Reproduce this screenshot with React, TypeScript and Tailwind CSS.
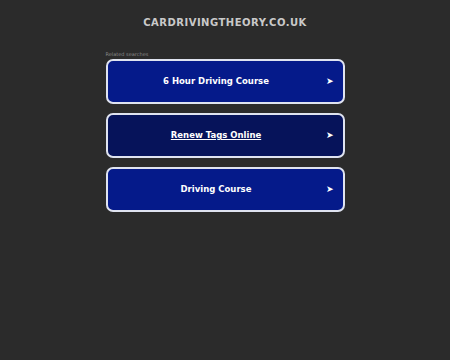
const links = [
  { label: "6 Hour Driving Course", bg: "bg-[#051a8a]", underline: false },
  { label: "Renew Tags Online", bg: "bg-[#06135a]", underline: true },
  { label: "Driving Course", bg: "bg-[#051a8a]", underline: false },
];

export default function App() {
  return (
    <div
      className="min-h-[360px] w-full bg-[#2b2b2b] flex flex-col items-center"
      style={{ fontFamily: '"DejaVu Sans", sans-serif' }}
    >
      <h1 className="mt-[16px] text-[10px] leading-[14px] font-bold tracking-[0.5px] text-[#c9c9c9]">
        CARDRIVINGTHEORY.CO.UK
      </h1>
      <div className="mt-[21px] w-[239px] flex flex-col">
        <p className="text-[5px] leading-[6px] text-[#8a8a8a] mb-[2px]">Related searches</p>
        <div className="flex flex-col gap-[9px]">
          {links.map((l) => (
            <a
              key={l.label}
              href="#"
              className={`${l.bg} relative h-[45px] rounded-[7px] border-2 border-[#dfe3f0] flex items-center justify-center pr-[18px] text-white font-bold text-[8.5px]`}
            >
              <span className={l.underline ? "underline" : "no-underline"}>{l.label}</span>
              <span className="absolute right-[9px] top-1/2 -translate-y-1/2 text-[9px]">➤</span>
            </a>
          ))}
        </div>
      </div>
    </div>
  );
}
